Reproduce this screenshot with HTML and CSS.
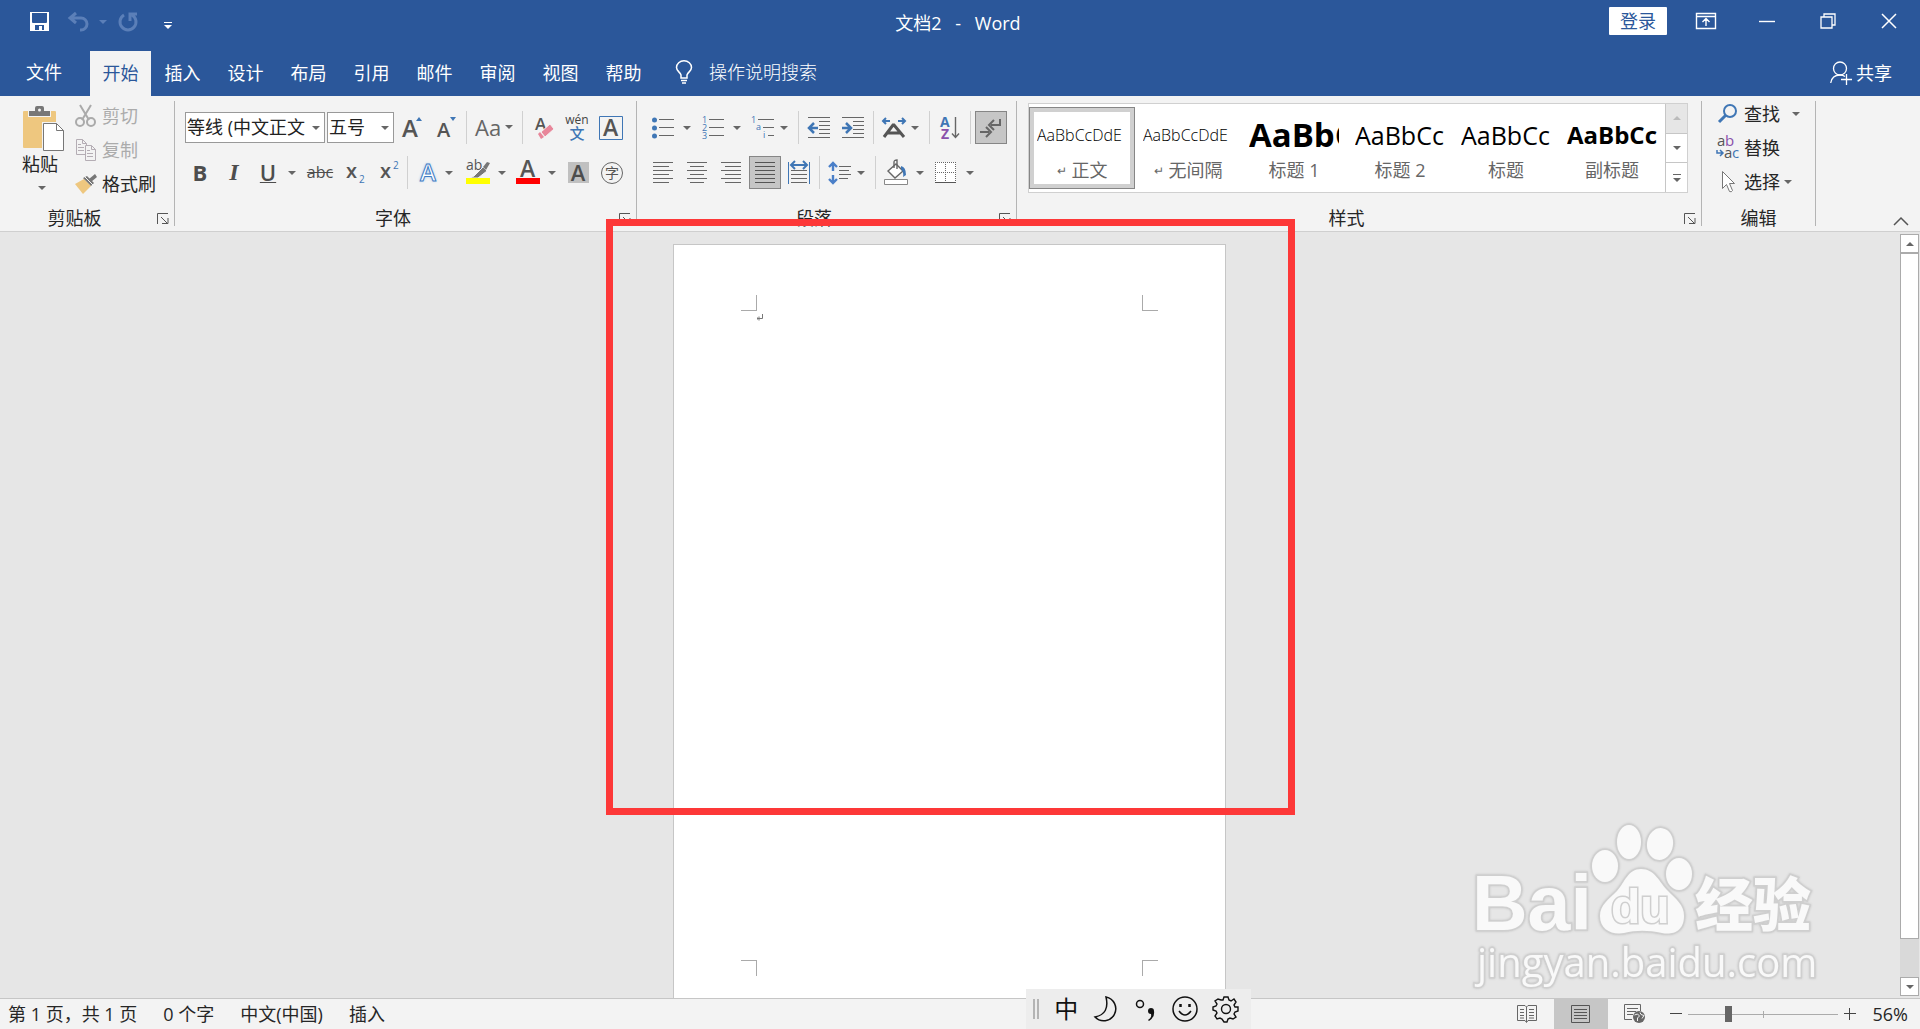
FILE: index.html
```html
<!DOCTYPE html>
<html lang="zh-CN">
<head>
    <meta charset="UTF-8">
    <meta name="viewport" content="width=device-width, initial-scale=1.0">
    <title>文档2 - Word</title>
    <link rel="stylesheet" href="styles.css">
</head>
<body>
    <!-- Titelleiste -->
    <header class="titlebar">
        <div class="quick">
            <button class="q-save" aria-label="保存"><svg width="20" height="20" viewBox="0 0 20 20"><path d="M0 0h19v19H0z" fill="#fff"/><path d="M2 1h15v9q0 1-1 1H3q-1 0-1-1zM5 13h9v5h-2v-4h-3v4H5z" fill="#2b579a"/></svg></button>
            <button class="q-undo" aria-label="撤消"><svg width="22" height="20" viewBox="0 0 22 20" fill="none" stroke="#5b7fb8" stroke-width="3"><path d="M8 1L2 6l6 5M2 6h11a6 6 0 0 1 0 12h-1"/></svg></button>
            <button class="q-drop caret faded" aria-label="撤消选项"></button>
            <button class="q-redo" aria-label="重复"><svg width="20" height="20" viewBox="0 0 20 20" fill="none" stroke="#5b7fb8" stroke-width="3"><path d="M6 3a8 8 0 1 0 8 0M12 9V2h7"/></svg></button>
            <button class="q-more" aria-label="自定义快速访问工具栏"><svg width="8" height="8" viewBox="0 0 8 8" fill="#fff"><path d="M0 0h8v1H0zM0 3h8L4 7z"/></svg></button>
        </div>
        <h1>文档2 &ensp;- &ensp;Word</h1>
        <div class="window-buttons">
            <button class="login">登录</button>
            <button class="win" aria-label="功能区显示选项"><svg width="20" height="16" viewBox="0 0 20 16" fill="none" stroke="#fff"><path d="M.5.5h19v15H.5zM.5 3.500h19M10 13V6M6.500 9L10 5.500 13.500 9" stroke-width="1.400"/></svg></button>
            <button class="win" aria-label="最小化"><svg width="16" height="16" viewBox="0 0 16 16" stroke="#fff"><path d="M0 8.500h16" stroke-width="1.400"/></svg></button>
            <button class="win" aria-label="向下还原"><svg width="16" height="16" viewBox="0 0 16 16" fill="none" stroke="#fff" stroke-width="1.300"><path d="M1 4h11v11H1zM4 4V1h11v11h-3"/></svg></button>
            <button class="win" aria-label="关闭"><svg width="16" height="16" viewBox="0 0 16 16" stroke="#fff" stroke-width="1.500"><path d="M1 1l14 14M15 1L1 15"/></svg></button>
        </div>
    </header>

    <!-- Register -->
    <nav class="tabs">
        <a href="#" class="file">文件</a>
        <a href="#" class="active">开始</a>
        <a href="#">插入</a>
        <a href="#">设计</a>
        <a href="#">布局</a>
        <a href="#">引用</a>
        <a href="#">邮件</a>
        <a href="#">审阅</a>
        <a href="#">视图</a>
        <a href="#">帮助</a>
        <button class="tell-me"><svg width="18" height="24" viewBox="0 0 18 24" fill="none" stroke="#fff" stroke-width="1.500"><path d="M6 18v-3C5 12 1.500 11 1.500 7.500a7.500 6.700 0 0 1 15 0C16.500 11 13 12 12 15v3zM6 20.500h6M7 23h4"/></svg><span>操作说明搜索</span></button>
        <button class="share"><svg width="22" height="24" viewBox="0 0 22 24" fill="none" stroke="#fff" stroke-width="1.300"><circle cx="10" cy="7.500" r="6.500"/><path d="M.7 22C1.500 17 5 14 10 14q3 0 5 1.500M11 18.500h11M16.500 13v11"/></svg>共享</button>
    </nav>

    <!-- Menüband -->
    <div class="ribbon">
        <section class="group clipboard">
            <div class="group-body">
                <button class="paste">
                    <svg width="42" height="46" viewBox="0 0 42 46"><path d="M1 5h31q1 0 1 1v35q0 1-1 1H1q-1 0-1-1V6q0-1 1-1z" fill="#eec77f"/><path d="M5 4h23v7H5z" fill="#f3f3f3"/><path d="M6 10V5h6V2q0-2 2-2h5q2 0 2 2v3h6v5z" fill="#777"/><circle cx="16.500" cy="4" r="1.500" fill="#f3f3f3"/><path d="M19 16h16v29H19z" fill="#f3f3f3"/><path d="M20.500 17.500h13l7 7v20h-20z" fill="#fff" stroke="#777"/><path d="M33.500 17.500v7h7" fill="none" stroke="#777"/></svg>
                    <span>粘贴</span>
                    <i class="caret"></i>
                </button>
                <div class="stack">
                    <button class="disabled" disabled><svg width="22" height="22" viewBox="0 0 22 22" fill="none" stroke="#aaa" stroke-width="2"><path d="M5 0l9 15M16 0L7 15"/><circle cx="5" cy="17" r="4"/><circle cx="16" cy="17" r="4"/></svg>剪切</button>
                    <button class="disabled" disabled><svg width="22" height="22" viewBox="0 0 22 22" fill="#f3f3f3" stroke="#b4adb4"><path d="M1.500.5h6l4 4v11h-10zM7.500.5v4h4M3 5.500h3M3 8.500h6M3 11.500h6"/><path d="M10.500 6.500h6l4 4v11h-10zM16.500 6.500v4h4M12 11.500h3M12 14.500h6M12 17.500h6"/></svg>复制</button>
                    <button><svg width="22" height="20" viewBox="0 0 22 20"><path d="M0 10L9 5l7 7-8 8z" fill="#eec77f"/><path d="M8 4l4-2 7 7-3 3z" fill="#777"/><path d="M14 5l6-5 2 3-6 5z" fill="#777"/><path d="M10 3l8 8" stroke="#f3f3f3"/></svg>格式刷</button>
                </div>
            </div>
            <div class="group-foot"><span>剪贴板</span><button class="launcher" aria-label="剪贴板设置"><svg width="12" height="11" viewBox="0 0 12 11" fill="none" stroke="#555"><path d="M.5 11V.5H11M4 4l6 6M11 5v5.500H5"/></svg></button></div>
        </section>

        <section class="group font">
            <div class="group-body rows">
                <div class="row font-top">
                    <div class="set">
                        <div class="combo combo-font"><select aria-label="字体"><option>等线 (中文正文</option></select></div>
                        <div class="combo combo-size"><select aria-label="字号"><option>五号</option></select></div>
                        <button class="tool" aria-label="增大字号"><svg width="22" height="24" viewBox="0 0 22 24"><text x="2" y="21" class="glyph" font-size="24">A</text><path d="M16 5h6l-3-4z" fill="#3f76b5"/></svg></button>
                        <button class="tool" aria-label="减小字号"><svg width="22" height="24" viewBox="0 0 22 24"><text x="3" y="21" class="glyph" font-size="20">A</text><path d="M16 1h6l-3 4z" fill="#3f76b5"/></svg></button>
                    </div>
                    <div class="set"><button class="case">Aa<i class="caret"></i></button></div>
                    <div class="set">
                        <button class="tool" aria-label="清除格式"><svg width="22" height="24" viewBox="0 0 22 24"><text x="3" y="14" class="glyph" font-size="17">A</text><path d="M9 16l9-8 4 5-9 8z" fill="#e8869a" stroke="#f3f3f3"/><path d="M6 18l2-2 4 5-3 2z" fill="#e8869a"/></svg></button>
                        <button class="tool pinyin" aria-label="拼音指南"><span>wén</span><b>文</b></button>
                        <button class="tool" aria-label="字符边框"><svg width="24" height="24" viewBox="0 0 24 24"><path d="M.5.5h23v23H.5z" fill="none" stroke="#3f76b5"/><text x="4" y="20" class="glyph" font-size="23">A</text></svg></button>
                    </div>
                </div>
                <div class="row font-bottom">
                    <div class="set">
                        <button class="tool letter bold">B</button>
                        <button class="tool letter italic">I</button>
                        <div class="split"><button class="tool letter underline">U</button><button class="drop caret" aria-label="下划线选项"></button></div>
                        <button class="tool wide letter strike">abc</button>
                        <button class="tool" aria-label="下标"><svg width="20" height="24" viewBox="0 0 20 24"><text x="0" y="17" class="glyph" font-size="20">x</text><text x="13" y="22" fill="#3f76b5" font-size="10">2</text></svg></button>
                        <button class="tool" aria-label="上标"><svg width="20" height="24" viewBox="0 0 20 24"><text x="0" y="17" class="glyph" font-size="20">x</text><text x="13" y="8" fill="#3f76b5" font-size="10">2</text></svg></button>
                    </div>
                    <div class="set">
                        <div class="split near"><button class="tool effects" aria-label="文本效果">A</button><button class="drop caret" aria-label="文本效果选项"></button></div>
                        <div class="split"><button class="tool" aria-label="突出显示"><svg width="24" height="25" viewBox="0 0 24 25"><text x="0" y="10" class="thin" font-size="14">ab</text><path d="M8 16l9-9 4 4-9 7H4z" fill="#777" stroke="#f3f3f3"/><path d="M17 7l4-5 3 1-4 7z" fill="#777"/><path d="M0 18h24v6H0z" fill="#ff0"/></svg></button><button class="drop caret" aria-label="突出显示选项"></button></div>
                        <div class="split"><button class="tool" aria-label="字体颜色"><svg width="24" height="25" viewBox="0 0 24 25"><text x="4" y="17" class="glyph" font-size="23">A</text><path d="M0 18h24v6H0z" fill="#f00"/></svg></button><button class="drop caret" aria-label="字体颜色选项"></button></div>
                        <button class="tool" aria-label="字符底纹"><span class="shaded">A</span></button>
                        <button class="tool" aria-label="带圈字符"><span class="ringed">字</span></button>
                    </div>
                </div>
            </div>
            <div class="group-foot"><span>字体</span><button class="launcher" aria-label="字体设置"><svg width="12" height="11" viewBox="0 0 12 11" fill="none" stroke="#555"><path d="M.5 11V.5H11M4 4l6 6M11 5v5.500H5"/></svg></button></div>
        </section>

        <section class="group paragraph">
            <div class="group-body rows">
                <div class="row para-top">
                    <div class="set">
                        <div class="split"><button class="tool" aria-label="项目符号"><svg width="22" height="22" viewBox="0 0 22 22"><g fill="#3f76b5"><circle cx="2.500" cy="3" r="2.500"/><circle cx="2.500" cy="11" r="2.500"/><circle cx="2.500" cy="19" r="2.500"/></g><path d="M7 2.500h15M7 10.500h15M7 18.500h15" stroke="#666"/></svg></button><button class="drop caret" aria-label="项目符号选项"></button></div>
                        <div class="split"><button class="tool" aria-label="编号"><svg width="22" height="24" viewBox="0 0 22 24"><g fill="#3f76b5" font-size="9"><text x="0" y="7">1</text><text x="0" y="15">2</text><text x="0" y="23">3</text></g><path d="M7 3.500h15M7 11.500h15M7 19.500h15" stroke="#666"/></svg></button><button class="drop caret" aria-label="编号选项"></button></div>
                        <div class="split near"><button class="tool" aria-label="多级列表"><svg width="24" height="24" viewBox="0 0 24 24"><g fill="#3f76b5" font-size="9"><text x="0" y="7">1</text><text x="5" y="14">a</text><text x="12" y="22">i</text></g><path d="M7 3.500h16M12 11.500h11M17 19.500h6" stroke="#666"/></svg></button><button class="drop caret" aria-label="多级列表选项"></button></div>
                    </div>
                    <div class="set">
                        <button class="tool" aria-label="减少缩进量"><svg width="22" height="22" viewBox="0 0 22 22"><path d="M0 .5h22M11 4.500h11M11 8.500h11M11 12.500h11M11 16.500h11M0 20.500h22" stroke="#666"/><path d="M10 11H2M6 6l-5 5 5 5" stroke="#3f76b5" stroke-width="2.500" fill="none"/></svg></button>
                        <button class="tool" aria-label="增加缩进量"><svg width="22" height="22" viewBox="0 0 22 22"><path d="M0 .5h22M11 4.500h11M11 8.500h11M11 12.500h11M11 16.500h11M0 20.500h22" stroke="#666"/><path d="M0 11h8M4 6l5 5-5 5" stroke="#3f76b5" stroke-width="2.500" fill="none"/></svg></button>
                    </div>
                    <div class="set">
                        <div class="split near"><button class="tool" aria-label="中文版式"><svg width="24" height="22" viewBox="0 0 24 22"><path d="M8 4H1M4 1L1 4l3 3M16 4h7M20 1l3 3-3 3" stroke="#3f76b5" stroke-width="2" fill="none"/><path d="M2 20L11 8h1L22 20M6 16h12" stroke="#555" stroke-width="3" fill="none"/></svg></button><button class="drop caret" aria-label="中文版式选项"></button></div>
                    </div>
                    <div class="set">
                        <button class="tool" aria-label="排序"><svg width="20" height="24" viewBox="0 0 20 24"><text x="0" y="11" fill="#3f76b5" font-weight="bold" font-size="14">A</text><text x="1" y="23" fill="#8a50ab" font-weight="bold" font-size="14">Z</text><path d="M15.500 1v20M12 17.500l3.500 4 3.500-4" stroke="#666" stroke-width="1.400" fill="none"/></svg></button>
                    </div>
                    <div class="set">
                        <button class="tool pressed" aria-label="显示编辑标记"><svg width="22" height="20" viewBox="0 0 22 20" fill="none" stroke="#666" stroke-width="2"><path d="M20 1v6h-9M14 2l-5 5 5 5M0 14h9M6 9l5 5-5 5"/></svg></button>
                    </div>
                </div>
                <div class="row para-bottom">
                    <div class="set">
                        <button class="tool" aria-label="左对齐"><svg width="20" height="22" viewBox="0 0 20 22" stroke="#666"><path d="M0 .5h20M0 4.500h16M0 8.500h20M0 12.500h16M0 16.500h20M0 20.500h16"/></svg></button>
                        <button class="tool" aria-label="居中"><svg width="20" height="22" viewBox="0 0 20 22" stroke="#666"><path d="M0 .5h20M3 4.500h14M0 8.500h20M3 12.500h14M0 16.500h20M3 20.500h14"/></svg></button>
                        <button class="tool" aria-label="右对齐"><svg width="20" height="22" viewBox="0 0 20 22" stroke="#666"><path d="M0 .5h20M4 4.500h16M0 8.500h20M4 12.500h16M0 16.500h20M4 20.500h16"/></svg></button>
                        <button class="tool pressed" aria-label="两端对齐"><svg width="20" height="22" viewBox="0 0 20 22" stroke="#555"><path d="M0 .5h20M0 4.500h20M0 8.500h20M0 12.500h20M0 16.500h20M0 20.500h20"/></svg></button>
                        <button class="tool" aria-label="分散对齐"><svg width="22" height="23" viewBox="0 0 22 23" fill="none"><path d="M3 9.500h16M3 13.500h16M3 17.500h16M3 21.500h16" stroke="#666"/><path d="M.5 1v22M21.500 1v22" stroke="#3f76b5"/><path d="M4 4h14M7 0L3 4l4 4M15 0l4 4-4 4" stroke="#3f76b5" stroke-width="2"/></svg></button>
                    </div>
                    <div class="set">
                        <div class="split near"><button class="tool" aria-label="行和段落间距"><svg width="22" height="24" viewBox="0 0 22 24" fill="none"><path d="M10 5.500h12M10 9.500h10M10 13.500h12M10 17.500h9" stroke="#666"/><path d="M4 10V2M0 6l4-4 4 4M4 14v8M0 18l4 4 4-4" stroke="#4a7fc8" stroke-width="2.400"/></svg></button><button class="drop caret" aria-label="行距选项"></button></div>
                    </div>
                    <div class="set">
                        <div class="split"><button class="tool" aria-label="底纹"><svg width="24" height="25" viewBox="0 0 24 25"><path d="M12 4l7 7-8 7-7-7z" fill="#fff" stroke="#666" stroke-width="1.400"/><path d="M10 8V2q0-2 3-2v9" fill="none" stroke="#666" stroke-width="1.400"/><path d="M17 6q5 1 5 9l-3 2q1-5-2-8z" fill="#3f76b5"/><path d="M.5 19.500h23v5H.5z" fill="#fff" stroke="#888"/></svg></button><button class="drop caret" aria-label="底纹选项"></button></div>
                        <div class="split"><button class="tool" aria-label="边框"><svg width="22" height="22" viewBox="0 0 22 22"><path d="M0 0h21v21H0z" fill="#fff"/><path d="M.5 0v20M10.500 0v20M20.500 0v20M0 .5h21M0 10.500h21" stroke="#666" stroke-dasharray="1 1"/><path d="M0 20.500h21" stroke="#555"/></svg></button><button class="drop caret" aria-label="边框选项"></button></div>
                    </div>
                </div>
            </div>
            <div class="group-foot"><span>段落</span><button class="launcher" aria-label="段落设置"><svg width="12" height="11" viewBox="0 0 12 11" fill="none" stroke="#555"><path d="M.5 11V.5H11M4 4l6 6M11 5v5.500H5"/></svg></button></div>
        </section>

        <section class="group styles">
            <div class="group-body">
                <div class="gallery">
                    <button class="style selected"><span class="sample body">AaBbCcDdE</span><span class="name"><small>↵</small>正文</span></button>
                    <button class="style"><span class="sample body">AaBbCcDdE</span><span class="name"><small>↵</small>无间隔</span></button>
                    <button class="style"><span class="sample heading-one">AaBbC</span><span class="name">标题 1</span></button>
                    <button class="style"><span class="sample heading-two">AaBbCc</span><span class="name">标题 2</span></button>
                    <button class="style"><span class="sample heading-two">AaBbCc</span><span class="name">标题</span></button>
                    <button class="style"><span class="sample subtitle">AaBbCc</span><span class="name">副标题</span></button>
                    <div class="gallery-scroll">
                        <button class="off" aria-label="上一行"><i class="caret up"></i></button>
                        <button aria-label="下一行"><i class="caret"></i></button>
                        <button class="more" aria-label="更多样式"><i class="caret"></i></button>
                    </div>
                </div>
            </div>
            <div class="group-foot"><span>样式</span><button class="launcher" aria-label="样式设置"><svg width="12" height="11" viewBox="0 0 12 11" fill="none" stroke="#555"><path d="M.5 11V.5H11M4 4l6 6M11 5v5.500H5"/></svg></button></div>
        </section>

        <section class="group editing">
            <div class="group-body">
                <div class="stack">
                    <button><svg width="22" height="22" viewBox="0 0 22 22" fill="none" stroke="#3f76b5"><circle cx="13" cy="8" r="6" stroke-width="2"/><path d="M9 12l-7 7" stroke-width="3"/></svg>查找<i class="caret far"></i></button>
                    <button><svg width="22" height="24" viewBox="0 0 22 24"><g font-size="15"><text x="0" y="10" fill="#555">a</text><text x="8" y="10" fill="#8a50ab">b</text><text x="7" y="22" fill="#555">a</text><text x="15" y="22" fill="#3f76b5">c</text></g><path d="M0 14v3h5M3 14l3 3-3 3" fill="none" stroke="#3f76b5" stroke-width="1.500"/></svg>替换</button>
                    <button><svg width="22" height="24" viewBox="0 0 22 24" fill="#fff" stroke="#777"><path d="M5.500 1.500v17l4-4 3 7q2 1 3-1l-3-7h5z"/></svg>选择<i class="caret"></i></button>
                </div>
            </div>
            <div class="group-foot"><span>编辑</span></div>
        </section>
        <button class="collapse" aria-label="折叠功能区"><svg width="16" height="10" viewBox="0 0 16 10" fill="none" stroke="#555" stroke-width="1.500"><path d="M1 9l7-7 7 7"/></svg></button>
    </div>

    <!-- Dokument -->
    <main class="workspace">
        <div class="canvas">
            <article class="page">
                <div class="corners"><span class="corner tl"></span><span class="corner tr"></span></div>
                <div class="mark"><svg width="7" height="7" viewBox="0 0 7 7" fill="none" stroke="#777"><path d="M6.500 0v4.500H1M3 2.500v4M1.500 3.500v2"/></svg></div>
                <div class="corners last"><span class="corner bl"></span><span class="corner br"></span></div>
                <div class="highlight"></div>
            </article>
        </div>
        <div class="scrollbar">
            <button aria-label="向上滚动"><i class="caret up"></i></button>
            <div class="thumb"></div>
            <div class="rest"></div>
            <button aria-label="向下滚动"><i class="caret"></i></button>
        </div>

        <svg class="watermark" width="360" height="180" viewBox="0 0 360 180">
            <g class="wm-shape">
                <text x="2" y="110" class="wm-bold" font-size="77">Bai</text>
                <ellipse cx="135" cy="46" rx="13" ry="16"/>
                <ellipse cx="159" cy="22" rx="12" ry="17"/>
                <ellipse cx="190" cy="24" rx="13" ry="16" transform="rotate(8 190 24)"/>
                <ellipse cx="209" cy="54" rx="13" ry="16"/>
                <path d="M171 49c14 0 18 13 27 22 8 8 16 14 16 25 0 16-12 19-22 17-14-3-26-3-38 0-12 2-24-3-24-17 0-11 9-17 17-25 8-9 11-22 24-22z"/>
                <text x="141" y="103" class="wm-bold" font-size="48">du</text>
                <text x="225" y="106" class="wm-cjk" font-size="58">经验</text>
                <text x="7" y="157" font-size="40">jingyan.baidu.com</text>
            </g>
        </svg>
    </main>

    <!-- Statusleiste -->
    <footer class="statusbar">
        <span>第 1 页，共 1 页</span>
        <span>0 个字</span>
        <span>中文(中国)</span>
        <span>插入</span>
        <div class="views">
            <button aria-label="阅读视图"><svg width="20" height="18" viewBox="0 0 20 18" fill="none" stroke="#666"><path d="M9.500 2L8 .5H.5v15H8l1.500 2 1.500-2h8.500V.5H11zM9.500 2v15M3 4.500h4M3 7.500h4M3 10.500h4M3 13h4M12 4.500h5M12 7.500h5M12 10.500h5M12 13h5"/></svg></button>
            <button class="current" aria-label="页面视图"><svg width="20" height="18" viewBox="0 0 20 18" fill="none" stroke="#555"><path d="M.5.5h18v17H.5zM3 4.500h13M3 7.500h13M3 10.500h13M3 13.500h13"/></svg></button>
            <button aria-label="Web 版式视图"><svg width="22" height="20" viewBox="0 0 22 20" fill="none" stroke="#666"><path d="M8 15.500H.5V.5h16V7M3 4.500h11M3 7.500h9M3 10.500h6"/><circle cx="15" cy="13" r="6" fill="#666" stroke="none"/><path d="M10.500 11l3-1 2 2-2 2v3M16 8.500l1 2 3 1-2 3" stroke="#f3f3f3"/></svg></button>
        </div>
        <div class="zoom">
            <button aria-label="缩小"><svg width="12" height="12" viewBox="0 0 12 12"><path d="M0 5.500h12" stroke="#444"/></svg></button>
            <input type="range" min="0" max="100" value="26" aria-label="缩放">
            <button aria-label="放大"><svg width="12" height="12" viewBox="0 0 12 12"><path d="M0 5.500h12M5.500 0v12" stroke="#444"/></svg></button>
            <output>56%</output>
        </div>
    </footer>

    <!-- Eingabemethode -->
    <div class="ime">
        <i class="grip"></i>
        <button>中</button>
        <button aria-label="半角"><svg width="26" height="26" viewBox="0 0 26 26" fill="none" stroke="#111" stroke-width="1.500"><path d="M13 1a12 12 0 1 1-11 20Q17 18 13 1z"/></svg></button>
        <button aria-label="标点"><svg width="22" height="26" viewBox="0 0 22 26"><circle cx="5" cy="8" r="3.500" fill="none" stroke="#111" stroke-width="1.500"/><path d="M13 24q4-2 3-6a3 3 0 1 1 3-3q1 6-5 10z" fill="#111"/></svg></button>
        <button aria-label="表情"><svg width="26" height="26" viewBox="0 0 26 26" fill="none" stroke="#111" stroke-width="1.500"><circle cx="13" cy="13" r="12"/><path d="M7 15q6 8 12 0"/><path d="M8.500 8v3M17.500 8v3" stroke-width="2.500"/></svg></button>
        <button aria-label="设置"><svg width="26" height="26" viewBox="0 0 26 26" fill="none" stroke="#111" stroke-width="1.400"><path d="M10 4l1-3h4l1 3 2 1 3-2 2 3-2 3 1 2 3 0v4l-3 1-1 2 2 3-3 2-3-1-2 1-1 3h-3l-2-3-2-1-3 1-2-3 2-3-1-2-3-1v-3l3-1 1-2-2-3 3-2 3 1z"/><circle cx="13" cy="13" r="4.500"/></svg></button>
    </div>
</body>
</html>
```

FILE: styles.css
```css
* {
    box-sizing: border-box;
}
body {
    display: flex;
    flex-direction: column;
    position: relative;
    margin: 0;
    height: 100vh;
    overflow: hidden;
    background-color: #e6e6e6;
    color: #262626;
    font-family: "Open Sans", "Noto Sans CJK SC", sans-serif;
    font-size: 18px;
    line-height: 24px;
}
button {
    display: flex;
    align-items: center;
    justify-content: center;
    padding: 0;
    border: none;
    background: none;
    color: inherit;
    font: inherit;
    white-space: nowrap;
    cursor: pointer;
}
svg {
    display: block;
    flex: none;
    overflow: visible;
}
.caret::after {
    content: "";
    display: block;
    border: 4px solid transparent;
    border-top-color: #666;
    border-bottom: none;
}
.caret.up::after {
    border-top: none;
    border-bottom: 4px solid #666;
}
.caret.faded::after {
    border-top-color: #5b7fb8;
}

/* Titelleiste */
.titlebar {
    display: grid;
    grid-template-columns: 1fr auto 1fr;
    align-items: start;
    height: 51px;
    background-color: #2b579a;
    color: white;
}
.titlebar h1 {
    margin: 11px 4px 0 0;
    font-size: 18px;
    font-weight: normal;
}
.quick {
    display: flex;
    align-items: center;
    gap: 9px;
    height: 43px;
    padding-left: 30px;
}
.q-undo {
    margin-left: 9px;
}
.q-redo {
    margin-left: 2px;
}
.q-more {
    margin: 8px 0 0 17px;
}
.window-buttons {
    display: flex;
    justify-content: flex-end;
    align-items: center;
    height: 42px;
    padding-right: 1px;
}
.login {
    width: 58px;
    height: 28px;
    background-color: white;
    color: #2b579a;
    border-radius: 1px;
}
.win {
    width: 61px;
    height: 42px;
}
.login + .win {
    margin-left: 8px;
}

/* Register */
.tabs {
    display: flex;
    height: 45px;
    background-color: #2b579a;
    color: white;
}
.tabs a {
    width: 63px;
    line-height: 45px;
    text-align: center;
    color: inherit;
    text-decoration: none;
}
.tabs .file {
    width: 90px;
    padding-right: 2px;
    line-height: 43px;
}
.tabs .active {
    width: 61px;
    background-color: #f3f3f3;
    color: #2b579a;
}
.tell-me {
    gap: 16px;
    margin-left: 20px;
    height: 42px;
    font-weight: 300;
}
.share {
    gap: 4px;
    margin-left: auto;
    padding-right: 28px;
    height: 44px;
}

/* Menüband */
.ribbon {
    display: flex;
    position: relative;
    height: 136px;
    padding-top: 5px;
    background-color: #f3f3f3;
    border-bottom: 1px solid #cfcfcf;
}
.group {
    display: flex;
    flex-direction: column;
    flex: none;
    height: 125px;
    border-right: 1px solid #b4b4b4;
}
.clipboard {
    width: 175px;
}
.font {
    width: 462px;
}
.paragraph {
    width: 380px;
}
.styles {
    width: 685px;
}
.editing {
    width: 114px;
}
.group-body {
    display: flex;
    height: 103px;
}
.group-foot {
    display: flex;
    align-items: center;
    height: 22px;
    padding: 6px 5px 0 0;
}
.group-foot span {
    flex: 1;
    margin-right: 8px;
    text-align: center;
}
.editing .group-foot {
    padding-right: 0;
}
.editing .group-foot span {
    margin-right: 0;
}
.rows {
    flex-direction: column;
    gap: 12px;
    padding-top: 10px;
}
.row {
    display: grid;
    height: 33px;
}
.font .row {
    padding-left: 8px;
}
.paragraph .row {
    padding-left: 9px;
}
.font-top {
    grid-template-columns: 283px 56px 1fr;
}
.font-bottom {
    grid-template-columns: 224px 1fr;
}
.para-top {
    grid-template-columns: 152px 75px 56px 41px 1fr;
}
.para-bottom {
    grid-template-columns: 173px 56px 1fr;
}
.set {
    display: flex;
    align-items: center;
}
.set + .set {
    padding-left: 3px;
    border-left: 1px solid #d0d0d0;
}
.tool {
    flex: none;
    width: 34px;
    height: 33px;
}
.tool.wide {
    width: 38px;
}
.tool.pressed {
    width: 32px;
    margin: 0 1px;
    background-color: #c6c6c6;
    border: 1px solid #868686;
}
.split {
    display: flex;
    width: 50px;
}
.drop {
    width: 14px;
    height: 33px;
}
.near .drop {
    width: 8px;
}
.glyph {
    fill: #555;
    font-weight: 600;
}
.thin {
    fill: #555;
}
.letter {
    color: #4d4d4d;
    font-size: 22px;
    line-height: 24px;
    padding-bottom: 2px;
}
.bold {
    font-weight: bold;
}
.italic {
    font-family: "Liberation Serif", serif;
    font-style: italic;
    font-weight: bold;
    font-size: 24px;
}
.underline {
    font-weight: 600;
    text-decoration: underline;
    text-decoration-thickness: 1px;
}
.strike {
    font-size: 16px;
    text-decoration: line-through;
}
.case {
    gap: 4px;
    padding: 0 0 2px 5px;
    color: #666;
    font-size: 22px;
}
.pinyin {
    flex-direction: column;
    color: #444;
    font-size: 12px;
    line-height: 12px;
}
.pinyin b {
    color: #3f76b5;
    font-size: 15px;
    font-weight: 500;
    line-height: 15px;
}
.effects {
    color: white;
    font-size: 24px;
    font-weight: 600;
    padding-bottom: 2px;
    -webkit-text-stroke: 1px #3f7cc4;
    text-shadow: 0 0 3px #8ab8ec;
}
.shaded {
    width: 21px;
    height: 21px;
    background-color: #c0c0c0;
    color: #4d4d4d;
    font-weight: 600;
    font-size: 22px;
    line-height: 21px;
}
.ringed {
    width: 22px;
    height: 22px;
    border: 1px solid #666;
    border-radius: 50%;
    color: #555;
    font-size: 14px;
    line-height: 19px;
}
.combo {
    display: flex;
    position: relative;
    height: 31px;
    margin-left: 2px;
}
.combo-font {
    width: 140px;
}
.combo-size {
    width: 67px;
}
.combo select {
    appearance: none;
    width: 100%;
    padding: 0 0 2px 1px;
    border: 1px solid #999;
    border-radius: 0;
    background-color: white;
    color: #222;
    font: inherit;
}
.combo::after {
    content: "";
    position: absolute;
    top: 14px;
    right: 5px;
    border: 4px solid transparent;
    border-top-color: #666;
    border-bottom: none;
}

/* Zwischenablage */
.paste {
    flex-direction: column;
    justify-content: flex-start;
    width: 42px;
    height: 90px;
    margin: 5px 10px 0 23px;
}
.paste span {
    margin: 0 8px 8px 0;
}
.paste .caret {
    margin: 2px 4px 0 0;
}
.stack {
    display: flex;
    flex-direction: column;
    margin-top: -2px;
}
.stack button {
    justify-content: flex-start;
    gap: 5px;
    height: 34px;
}
.stack svg {
    width: 22px;
}
.disabled {
    color: #ababab;
}
.editing .stack {
    padding-left: 15px;
    margin-top: -4px;
}
.stack .caret {
    margin-left: -1px;
}
.stack .far {
    margin-left: 7px;
}

/* Formatvorlagen */
.gallery {
    display: flex;
    width: 660px;
    height: 90px;
    margin: 2px 0 0 11px;
    background-color: white;
    border: 1px solid #d0d0d0;
}
.style {
    flex: none;
    flex-direction: column;
    justify-content: flex-start;
    width: 106px;
    height: 82px;
    margin-top: 3px;
    padding: 7px 8px;
    color: #666;
}
.selected {
    padding: 6px 7px;
    border: 1px solid #868686;
    box-shadow: inset 0 0 0 4px #d0d0d0;
}
.sample {
    width: 90px;
    height: 42px;
    overflow: hidden;
    color: black;
    line-height: 42px;
    text-align: left;
}
.sample.body {
    font-size: 16px;
    font-weight: 300;
}
.heading-one {
    font-size: 33px;
    font-weight: bold;
}
.heading-two {
    font-size: 25px;
}
.subtitle {
    font-size: 24px;
    font-weight: bold;
}
.name {
    display: flex;
    gap: 5px;
    height: 24px;
    margin-top: 4px;
    white-space: pre;
}
.name small {
    font-size: 12px;
    line-height: 26px;
}
.gallery-scroll {
    display: flex;
    flex-direction: column;
    width: 22px;
    border-left: 1px solid #c6c6c6;
}
.gallery-scroll button {
    flex: 1;
    border-bottom: 1px solid #c6c6c6;
}
.gallery-scroll .more {
    flex-direction: column;
    gap: 3px;
    border-bottom: none;
}
.more::before {
    content: "";
    width: 8px;
    height: 1px;
    background-color: #666;
}
.gallery-scroll .off {
    background-color: #e6e6e6;
}
.off .caret.up::after {
    border-bottom-color: #bbb;
}
.collapse {
    align-self: flex-end;
    margin: 0 11px 5px auto;
}

/* Dokument */
.workspace {
    display: flex;
    position: relative;
    flex: 1;
    min-height: 0;
}
.canvas {
    display: flex;
    justify-content: center;
    flex: 1;
    padding: 12px 1px 0 0;
}
.page {
    display: flex;
    flex-direction: column;
    position: relative;
    width: 553px;
    padding: 50px 67px 22px;
    background-color: white;
    border: 1px solid #c6c6c6;
    border-bottom: none;
}
.corners {
    display: flex;
    justify-content: space-between;
}
.corners.last {
    margin-top: auto;
}
.corner {
    width: 16px;
    height: 16px;
    border: 0 solid #aaa;
}
.tl {
    border-width: 0 1px 1px 0;
}
.tr {
    border-width: 0 0 1px 1px;
}
.bl {
    border-width: 1px 1px 0 0;
}
.br {
    border-width: 1px 0 0 1px;
}
.mark {
    padding: 3px 0 0 15px;
}
.highlight {
    position: absolute;
    top: -26px;
    left: -68px;
    width: 689px;
    height: 596px;
    border: 7px solid #fd3838;
}
.scrollbar {
    display: flex;
    flex-direction: column;
    width: 20px;
    padding: 2px 1px 2px 0;
}
.scrollbar button {
    height: 19px;
    background-color: white;
    border: 1px solid #ababab;
}
.thumb {
    flex: 18;
    background-color: white;
    border: 1px solid #ababab;
}
.rest {
    flex: 1;
    background-color: #d9d9d9;
}
.watermark {
    position: absolute;
    right: 90px;
    bottom: -2px;
}
.wm-shape {
    fill: #f9f9f9;
    stroke: #cfcfcf;
    stroke-width: 3px;
    paint-order: stroke;
    filter: drop-shadow(0 0 1px #c4c4c4);
}
.wm-bold {
    font-family: "Liberation Sans", sans-serif;
    font-weight: bold;
}
.wm-cjk {
    font-weight: 900;
}

/* Statusleiste */
.statusbar {
    display: flex;
    align-items: center;
    gap: 26px;
    height: 31px;
    padding: 0 12px 0 8px;
    background-color: #f3f3f3;
    border-top: 1px solid #c6c6c6;
}
.views {
    display: flex;
    align-self: stretch;
    margin-left: auto;
}
.views button {
    width: 54px;
}
.views .current {
    background-color: #c6c6c6;
}
.zoom {
    display: flex;
    align-items: center;
    gap: 6px;
    margin-left: -18px;
}
.zoom input {
    appearance: none;
    width: 150px;
    height: 16px;
    margin: 0;
    background: linear-gradient(#ababab, #ababab) center / 100% 1px no-repeat, linear-gradient(#ababab, #ababab) center / 1px 7px no-repeat;
}
.zoom input::-webkit-slider-thumb {
    appearance: none;
    width: 7px;
    height: 16px;
    background-color: #666;
}
.zoom output {
    width: 40px;
    margin-left: 6px;
    text-align: right;
}

/* Eingabemethode */
.ime {
    display: flex;
    align-items: center;
    justify-content: space-between;
    position: absolute;
    bottom: 0;
    left: calc(50% + 66px);
    width: 225px;
    height: 40px;
    padding: 0 12px 0 7px;
    background-color: #ededed;
    color: #111;
    font-size: 24px;
}
.grip {
    width: 6px;
    height: 20px;
    border: 2px solid #b4b4b4;
    border-width: 0 2px;
}
```
